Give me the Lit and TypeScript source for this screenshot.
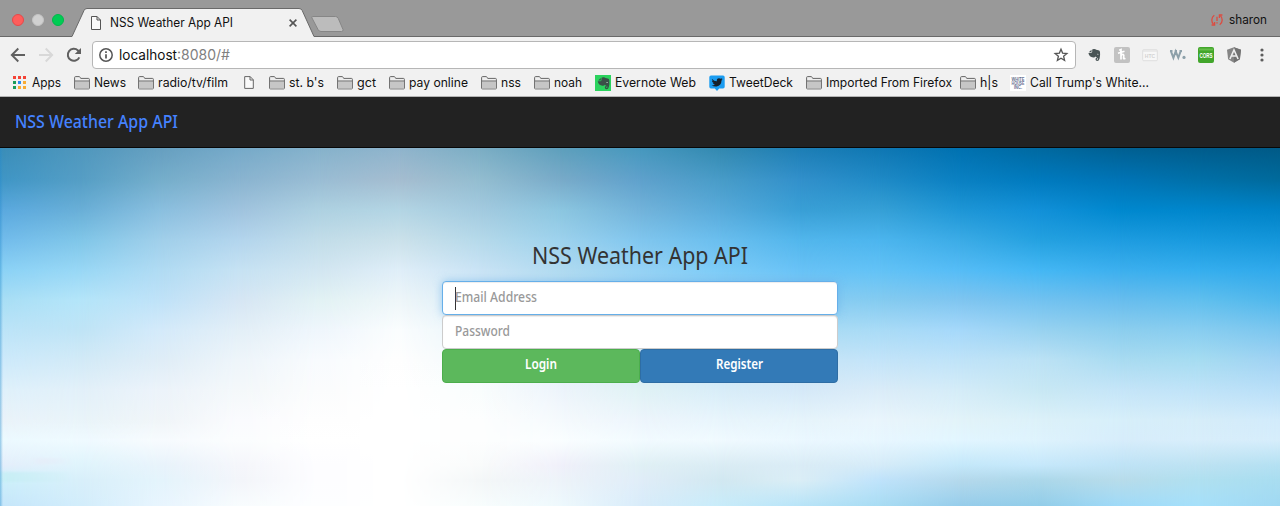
import { LitElement, html, css, svg } from "lit";
import { customElement } from "lit/decorators.js";
import { styleMap } from "lit/directives/style-map.js";

const SKY_ROWS = [148, 180, 210, 240, 270, 300, 330, 360, 390, 420, 440, 465, 480, 506];
const SKY_STEP = 80;

/* One vertical colour run per 80px of sky, left to right. */
const SKY_COLUMNS = [
  "3a8db8 3f96c6 5aa9df 72bcec 8bd2f6 a8def5 bce4f8 cdeafb dff1fb eaf3fa ecfaff e4eefb cdf0fb c5e6fb",
  "4f97bd 559ec5 69afd7 80c6e8 98d7f5 b4e5f9 bfe4f6 d2eaf7 e2f0f9 e9f4f9 effaff dff4fc d8effa d2edfb",
  "669fc0 75aecb 8abfdf a0cfea b0dbf3 bfe2f8 d4eafa dfedf7 ecf3fa f0f5f8 f7fbfe e8f3fb e4f4fc e8f5fe",
  "76aac9 8ab4d0 a0c3de b3d5ed c6e2f3 d6e6f4 e3eff7 eef5fa f4f8fa fafbfe fbfdfe f5f6fb f3f5fa f8fcfe",
  "86b2cb 9abdd4 aed1e1 c2dde9 d2e6f1 e2f2f4 eff6fc f8fbfe fbfcfd fefefe ffffff fdfdff fdfdff fdfeff",
  "8fb4cc a5bdd0 b3d5e4 cbe1ea dfeef8 eef6f9 fafdfe fefefe ffffff ffffff ffffff ffffff ffffff ffffff",
  "7badc4 93bdd0 a3cadf b5d9ea c9e3f5 d8ecf8 e8f4fa f2f9fc f9fdfd fdfefe fdfefe f9fbfb f4f7f8 f8fdfd",
  "5e9fbc 79abc9 8cc6e0 9dd2ed b0daf0 c5e4f4 d8edf8 e0f0f8 edf4fb f5fafd fafeff f0f0fa edf3f9 eef9fd",
  "4698be 5fa1cc 72b3da 80c6ee 96d2f4 a8daf3 c8e6f5 d0e8f5 e0f2f5 edf5fc f2fbff e0f0f5 e0edf8 d8ecfa",
  "3389b0 489cc8 58aada 6abeee 7ccbf7 98d3f3 b5dff5 c5e5f8 d8edf8 e8f5fc f0faff daecf4 d2e8f1 c8ecfa",
  "1d7eb5 3290cb 399fd6 52b6ec 68c2f6 88ccf3 a9dbf3 c6e4f6 d5e9f8 e6f4fb ebf8ff daecf6 dbeef6 b8e4f8",
  "0f77b3 1f8ac6 36a0d6 4cb5ee 62c2f6 84cbf0 a9dbf6 c3e4f9 daecf8 e9f5fc e8f7ff d5ebf8 bfe3fb a8dcf3",
  "0071b0 0a80c2 1e96d6 3babe6 55bcf6 7fc5f0 a5d8fa bfe3f8 d4ecf8 e2f3f9 e2f6ff c4e8fa b5d9ec 96cdeb",
  "0069a0 007abe 1290d8 24a1e0 44b7f4 72c2f0 98d2f0 bce2f5 c8e8f4 dcf1f9 def3fd c6e8fb acd8ea 92cde9",
  "006092 0074b6 0088ce 1e9ce0 3cafee 68bdee 8cceee a9dbf1 c5e5f8 d7effa d7edfb bfe3f6 b8dcea 9fdaf8",
  "005c8c 0070a8 0086cc 189ade 35aeee 60bfee 88cdf0 a6dcf1 bfe3f8 d6edf9 d8eefb bde2f2 b0e0f0 a6e0fa",
  "005a87 006a9c 0082c6 1496da 30a9eb 4fb7ec 7bc6ef a0d2f3 b9dff8 d2ebfb d6edfb b4e0f2 a8ddf0 a0d8f2",
].map((run) => run.split(" "));

/* Soft horizontal streaks near the horizon: x, y, width, height, colour. */
const STREAKS: [number, number, number, number, string][] = [
  [36, 458, 36, 6, "#ebe5f5"], [74, 457, 70, 5, "#d9f6fb"], [0, 472, 70, 10, "#c5eff5"],
  [216, 470, 70, 4, "#f0f0f7"], [72, 448, 140, 5, "#f2f3f7"], [505, 467, 80, 5, "#f2eefa"],
  [470, 483, 130, 5, "#e9eef0"], [577, 488, 180, 4, "#d6e4eb"], [650, 446, 70, 8, "#e6f6f5"],
  [640, 467, 80, 6, "#d7eaf0"], [720, 461, 130, 4, "#cfe5f0"], [865, 479, 70, 9, "#b9dcfa"],
  [938, 457, 72, 6, "#c8f0f2"], [938, 468, 70, 7, "#c2e1fd"], [1010, 457, 70, 5, "#dbe8f6"],
  [938, 477, 145, 5, "#a5cfe2"], [938, 484, 145, 5, "#b9eaf4"], [1010, 466, 72, 4, "#add9f4"],
  [865, 495, 140, 6, "#c8f2fa"], [1083, 456, 80, 7, "#bee4f9"], [1154, 469, 70, 5, "#bfeafc"],
  [1154, 476, 126, 4, "#a9cfe3"], [1154, 487, 126, 5, "#9bd3ea"], [1225, 481, 55, 3, "#b4e7fd"],
  [1154, 496, 70, 6, "#b9dcfb"], [940, 503, 340, 4, "#93cfe8"], [1230, 461, 50, 4, "#a9daee"],
];

const folder = svg`<svg width="16" height="14" viewBox="0 0 16 14">
  <path d="M.6 12.2V1.6Q.6.6 1.6.6H5Q5.8.6 6.2 1.4L6.7 2.4H14.4Q15.4 2.4 15.4 3.4V12.2Q15.4 12.9 14.6 12.9H1.4Q.6 12.9.6 12.2Z" fill="#eee" stroke="#666"/>
  <path d="M1 5.5H15V12.4H1Z" fill="#c6c6c6"/><path d="M1 5H15" stroke="#666"/></svg>`;
const page = svg`<svg width="10" height="13" viewBox="0 0 10 13">
  <path d="M.7.6H6.2L9.3 3.8V12.4H.7ZM6 .6V4H9.3" fill="#fafafa" stroke="#666"/></svg>`;
const elephant = svg`<path d="M5 .8C6.2.2 7.7.5 8.2 1.4L10.4 1.8Q11.9 2 12 3.6Q12.4 7 11.6 10Q11 12.6 9.2 12.6Q7.5 12.4 7.5 10.8Q7.6 9.2 9.4 9.4V10.5Q8.6 10.5 8.7 11Q9 11.6 9.7 11.3Q10.3 10.8 10 9.5Q8.4 9.2 7.6 8Q7 9.3 5.2 9.1Q1.2 8.7.4 4.6H3Q4.2 4.5 4.2 3.4V1.1ZM3.5 1.3V3.3Q3.5 3.8 3 3.8H.8Z"/>
  <path d="M9 5.6Q10.3 5 10.8 6.2Q10 5.9 9 6.1Z" fill="#d5dad9"/>`;
const bird = svg`<path d="M3 4Q5 6.2 7.8 6.3Q7.5 3.4 10 3.2Q11 3.2 11.7 3.8L13.3 3.3L12.6 4.5L13.6 4.4L12.5 5.6Q12.4 10.8 7.6 11.5Q4.8 11.8 2.7 10.5Q4.7 10.5 5.9 9.6Q4.3 9.2 3.9 8.1H4.8Q3.1 7.3 3 5.9L3.9 6.1Q2.5 5 3 4Z" fill="#17202a"/>`;

const ICONS: Record<string, unknown> = {
  apps: svg`<svg width="14" height="14" viewBox="0 0 14 14">${[
    "#f44336", "#f44336", "#f44336", "#1a9c5b", "#2a8bf2", "#f9ab34", "#1a9c5b", "#f9ab34", "#f9ab34",
  ].map((c, i) => svg`<rect x=${(i % 3) * 5} y=${Math.floor(i / 3) * 5} width="3" height="3" fill=${c}></rect>`)}</svg>`,
  folder,
  page,
  evernote: svg`<svg width="16" height="16" viewBox="0 0 16 16"><path d="M0 0H16V16H0Z" fill="#2bd35e"/><g transform="translate(2.3 1.7)" fill="#3a5048">${elephant}</g></svg>`,
  tweetdeck: svg`<svg width="16" height="16" viewBox="0 0 16 16"><path d="M2 .5H14Q15.7.5 15.7 2.2V11.8Q15.7 13.5 14 13.5H10.2L8 16L5.8 13.5H2Q.3 13.5.3 11.8V2.2Q.3.5 2 .5Z" fill="#1b9cf0"/>${bird}</svg>`,
  white: svg`<svg width="16" height="16" viewBox="0 0 16 16"><path d="M0 0H16V16H0Z" fill="#fff"/><g font-family="Liberation Sans" font-weight="700" font-size="4.8" fill="#66718f" text-anchor="middle"><text x="8" y="6.4" textLength="13" lengthAdjust="spacingAndGlyphs">WHITE</text><text x="8" y="10.2" textLength="13" lengthAdjust="spacingAndGlyphs">HOUSE</text><text x="8" y="14" textLength="8" lengthAdjust="spacingAndGlyphs">INC.</text></g></svg>`,
};

/* icon, label, label width, trailing gap */
const BOOKMARKS: [string, string, number, number][] = [
  ["apps", "Apps", 29, 13], ["folder", "News", 32, 12], ["folder", "radio/tv/film", 70, 16],
  ["page", "", 0, 15], ["folder", "st. b's", 35, 13], ["folder", "gct", 19, 13],
  ["folder", "pay online", 59, 13], ["folder", "nss", 20, 13], ["folder", "noah", 28, 13],
  ["evernote", "Evernote Web", 81, 13], ["tweetdeck", "TweetDeck", 64, 13],
  ["folder", "Imported From Firefox", 126, 8], ["folder", "h|s", 18, 12], ["white", "Call Trump's White...", 119, 0],
];

/* Single-line label fitted to a given width. */
const label = (text: string, width: number, size: number, fill = "#111", weight = 400) => svg`
  <svg class="label" width=${width} height=${Math.ceil(size) + 7}>
    <text x="0" y=${Math.round(size) + 1} font-size=${size} font-weight=${weight} fill=${fill} textLength=${width} lengthAdjust="spacingAndGlyphs">${text}</text>
  </svg>`;

@customElement("browser-chrome")
class BrowserChrome extends LitElement {
  static styles = css`
    :host { display: block; height: 97px; font-family: Inter, "Liberation Sans", sans-serif; background: #f1f1f1; }
    svg { display: block; flex: none; fill: none; overflow: visible; }
    .tabs { height: 37px; display: grid; background: #999; box-sizing: border-box; }
    .shape, .tabrow { grid-area: 1 / 1; }
    .shape { overflow: hidden; }
    .tabrow { display: flex; align-items: center; padding: 2px 13px 0 12px; }
    .dots { display: flex; gap: 8px; width: 79px; }
    .dot { width: 10px; height: 10px; border: 1px solid #e5484a; border-radius: 50%; background: #fe5d5b; }
    .dot.mid { background: #d0d0d0; border-color: #c3c3c3; }
    .dot.go { background: #00cc54; border-color: #00b84a; }
    .low { margin-top: 6px; }
    .title { margin-left: 9px; width: 179px; padding-top: 7px; }
    .spacer { flex: 1; }
    .user { display: flex; align-items: center; gap: 6px; }
    .user .label { margin-top: 1px; }
    .bar { height: 36px; display: flex; align-items: center; padding-left: 10px; }
    .nav { display: flex; width: 82px; gap: 12px; flex: none; }
    .address { box-sizing: border-box; flex: none; width: 984px; height: 28px; border: 1px solid #b6b6b6; border-radius: 4px; background: #fff; display: flex; align-items: center; padding: 0 7px 0 6px; }
    .host { display: flex; margin-left: 6px; flex: 1; padding-top: 1px; }
    .ext { display: flex; align-items: center; gap: 12px; margin-left: 10px; }
    .marks { box-sizing: border-box; height: 24px; display: flex; align-items: center; padding: 0 0 4px 13px; border-bottom: 1px solid #b3b3b3; }
    .mark { display: flex; align-items: center; gap: 4px; height: 20px; }
    .mark .label { margin-top: 1px; }
  `;

  render() {
    return html`
      <div class="tabs">
        <svg class="shape" width="1280" height="37">
          <path d="M-2 36.5H72L84 10.5Q84.8 8.5 87 8.5H299Q301.3 8.5 302.2 10.5L314 36.5H1282V40H-2Z" fill="#f1f1f1" stroke="#696969"/>
          <path d="M312.5 16.5H335.5Q337.5 16.5 338.3 18.5L343 29.5Q343.5 31.5 341.5 31.5H321Q319 31.5 318 29.5L312 18Q311.3 16.5 312.5 16.5Z" fill="#bcbcbc" stroke="#868686"/>
        </svg>
        <div class="tabrow">
          <div class="dots"><span class="dot"></span><span class="dot mid"></span><span class="dot go"></span></div>
          ${svg`<svg class="low" width="10" height="14" viewBox="0 0 10 14"><path d="M.5.5H6L9.5 4V13.5H.5ZM6 .5V4H9.5" fill="#fafafa" stroke="#555"/></svg>`}
          <div class="title">${label("NSS Weather App API", 123, 12.5)}</div>
          ${svg`<svg class="low" width="8" height="8" viewBox="0 0 8 8"><path d="M.6.6L7.4 7.4M7.4.6L.6 7.4" stroke="#555" stroke-width="1.6"/></svg>`}
          <span class="spacer"></span>
          <div class="user">
            ${svg`<svg width="12" height="12" viewBox="0 0 12 12" stroke="#dc4c41" stroke-width="1.3"><path d="M3.3 1.2Q.8 3 .8 6Q.8 8.7 2.6 10.4M8.7 10.8Q11.2 9 11.2 6Q11.2 3.3 9.4 1.6"/><path d="M.6 11H3.6V8M11.4 1H8.4V4"/><path d="M6 2.8V7M6 8.2V9.6"/></svg>`}
            ${label("sharon", 38, 12.5)}
          </div>
        </div>
      </div>
      <div class="bar">
        <div class="nav">
          ${svg`<svg width="16" height="16" viewBox="0 0 16 16"><path d="M15 8H2M8.3 1.5L1.8 8L8.3 14.5" stroke="#606060" stroke-width="1.9"/></svg>
          <svg width="16" height="16" viewBox="0 0 16 16"><path d="M1 8H14M7.7 1.5L14.2 8L7.7 14.5" stroke="#d8d8d8" stroke-width="1.9"/></svg>
          <svg width="16" height="16" viewBox="0 0 16 16"><path d="M13.3 10.3A6 6 0 1 1 12 3.5L13.4 5" stroke="#606060" stroke-width="2"/><path d="M15 .9V7H8.8Z" fill="#606060"/></svg>`}
        </div>
        <div class="address">
          ${svg`<svg width="14" height="14" viewBox="0 0 14 14"><circle cx="7" cy="7" r="6.2" stroke="#555" stroke-width="1.5"/><path d="M7 6.2V10.6M7 3.3V4.9" stroke="#555" stroke-width="1.7"/></svg>`}
          <div class="host">${label("localhost", 58, 14)}${label(":8080/#", 53, 14, "#808080")}</div>
          ${svg`<svg width="14" height="14" viewBox="0 0 14 14"><path d="M7 1.2L8.6 5.1L12.9 5.5L9.6 8.2L10.6 12.4L7 10.2L3.4 12.4L4.4 8.2L1.1 5.5L5.4 5.1Z" stroke="#555" stroke-width="1.3"/></svg>`}
        </div>
        <div class="ext">
          ${svg`<svg width="16" height="16" viewBox="0 0 16 16"><g fill="#4a5556" transform="translate(2 1.4)">${elephant}</g></svg>
          <svg width="16" height="16" viewBox="0 0 16 16"><rect width="16" height="16" rx="2" fill="#c2c2c2"/><path d="M5.2 3.2L7 2.5V12.5M7 9.2Q7.8 7 9.3 7.5Q10.2 8 9.6 10.2Q9 12.7 11.4 11.2M4 6.2L10.5 4.2" stroke="#fff" stroke-width="1.7"/></svg>
          <svg width="16" height="16" viewBox="0 0 16 16"><rect x=".7" y="2.7" width="14.6" height="11" rx="1" fill="#f7f7f7" stroke="#dedede"/><path d="M1 4H15" stroke="#dedede"/><text x="8" y="10.5" font-family="Liberation Sans" font-weight="700" font-size="5" text-anchor="middle" fill="#d3d3d3">HTC</text></svg>
          <svg width="16" height="16" viewBox="0 0 16 16"><path d="M.8 3.8L3.4 10.8L5.7 4.3L8.3 10.8L10.8 3.8M0 4H2.5M4.7 4H7M9.5 4H12" stroke="#8da0a9" stroke-width="2"/><circle cx="14" cy="10.4" r="1.6" fill="#8da0a9"/></svg>
          <svg width="16" height="16" viewBox="0 0 16 16"><rect width="16" height="16" rx="2" fill="#42a62b"/><path d="M1 2.5H15" stroke="#65bd49" stroke-width="2"/><text x="8" y="10.5" font-family="Liberation Sans" font-weight="700" font-size="6.5" textLength="13" lengthAdjust="spacingAndGlyphs" text-anchor="middle" fill="#fff">CORS</text></svg>
          <svg width="16" height="16" viewBox="0 0 16 16"><path d="M8 .3L15 2.8L13.9 12.2L8 15.7L2.1 12.2L1 2.8Z" fill="#858585"/><path d="M8 .3L15 2.8L13.9 12.2L8 15.7Z" fill="#727272"/><path d="M3.9 12L8 3L12.1 12M5.5 9H10.5" stroke="#eee" stroke-width="1.6"/></svg>
          <svg width="16" height="16" viewBox="0 0 16 16"><g fill="#5d5d5d"><circle cx="8" cy="3" r="1.6"/><circle cx="8" cy="8" r="1.6"/><circle cx="8" cy="13" r="1.6"/></g></svg>`}
        </div>
      </div>
      <div class="marks">
        ${BOOKMARKS.map(([icon, text, width, gap]) => html`
          <div class="mark" style=${styleMap({ marginRight: `${gap}px`, gap: icon === "apps" ? "5px" : null })}>
            ${ICONS[icon]}${text ? label(text, width, 12.5) : ""}
          </div>`)}
      </div>`;
  }
}

@customElement("sky-backdrop")
class SkyBackdrop extends LitElement {
  static styles = css`
    :host { display: grid; height: 358px; overflow: hidden; }
    .layer, .streaks { grid-area: 1 / 1; width: 1280px; height: 358px; }
  `;

  render() {
    return html`
      ${SKY_COLUMNS.map((run, i) => {
        const stops = run.map((c, r) => `#${c} ${SKY_ROWS[r] - 148}px`).join(",");
        const mask = i ? `linear-gradient(90deg, transparent ${(i - 1) * SKY_STEP}px, #000 ${i * SKY_STEP}px)` : "none";
        return html`<div class="layer" style=${styleMap({ background: `linear-gradient(${stops})`, maskImage: mask })}></div>`;
      })}
      <svg class="streaks" viewBox="0 148 1280 358">
        <defs>
          <filter id="soft" x="-20%" y="-100%" width="140%" height="300%"><feGaussianBlur stdDeviation="4 1.2" /></filter>
          <linearGradient id="edge"><stop stop-color="#258ccc" stop-opacity=".45" /><stop offset="1" stop-color="#258ccc" stop-opacity="0" /></linearGradient>
        </defs>
        ${STREAKS.map(([x, y, w, h, c]) => svg`<rect x=${x} y=${y} width=${w} height=${h} fill=${c} opacity=".85" filter="url(#soft)"></rect>`)}
        <rect x="0" y="148" width="3" height="358" fill="url(#edge)" />
        <rect x="1279" y="148" width="1" height="358" fill="#fff" opacity=".2" />
      </svg>`;
  }
}

@customElement("app-root")
class AppRoot extends LitElement {
  static styles = css`
    :host { display: block; width: 1280px; height: 506px; overflow: hidden; font-family: "Noto Sans", "Open Sans", sans-serif; }
    svg { display: block; fill: none; overflow: visible; }
    .navbar { box-sizing: border-box; height: 51px; background: #222; border-bottom: 1px solid #080808; padding: 12px 15px; }
    .stage { display: grid; height: 358px; }
    .stage > * { grid-area: 1 / 1; }
    .login { z-index: 1; width: 396px; margin: 92px auto 0; }
    .heading { display: flex; justify-content: center; height: 41px; }
    .field { box-sizing: border-box; height: 34px; border: 1px solid #ccc; border-radius: 4px; background: #fff; padding: 5px 12px; display: flex; box-shadow: inset 0 1px 1px rgba(0, 0, 0, 0.075); }
    .field.focus { border-color: #66afe9; box-shadow: inset 0 1px 1px rgba(0, 0, 0, 0.075), 0 0 8px rgba(102, 175, 233, 0.6); }
    .caret { width: 1px; height: 23px; margin: 0 -1px 0 0; background: #333; }
    .buttons { display: grid; grid-template-columns: 1fr 1fr; }
    .button { box-sizing: border-box; height: 34px; border: 1px solid #4cae4c; border-radius: 4px; background: #5cb85c; display: flex; justify-content: center; padding-top: 4px; }
    .button.register { background: #337ab7; border-color: #2e6da4; }
  `;

  render() {
    return html`
      <browser-chrome></browser-chrome>
      <div class="navbar">${label("NSS Weather App API", 163, 17.5, "#4582ff", 500)}</div>
      <div class="stage">
        <sky-backdrop></sky-backdrop>
        <div class="login">
          <div class="heading">${label("NSS Weather App API", 216, 23, "#333")}</div>
          <div class="field focus"><span class="caret"></span>${label("Email Address", 82, 13.5, "#999", 500)}</div>
          <div class="field">${label("Password", 55, 13.5, "#999", 500)}</div>
          <div class="buttons">
            <div class="button">${label("Login", 32, 13.5, "#fff", 600)}</div>
            <div class="button register">${label("Register", 47, 13.5, "#fff", 600)}</div>
          </div>
        </div>
      </div>`;
  }
}
